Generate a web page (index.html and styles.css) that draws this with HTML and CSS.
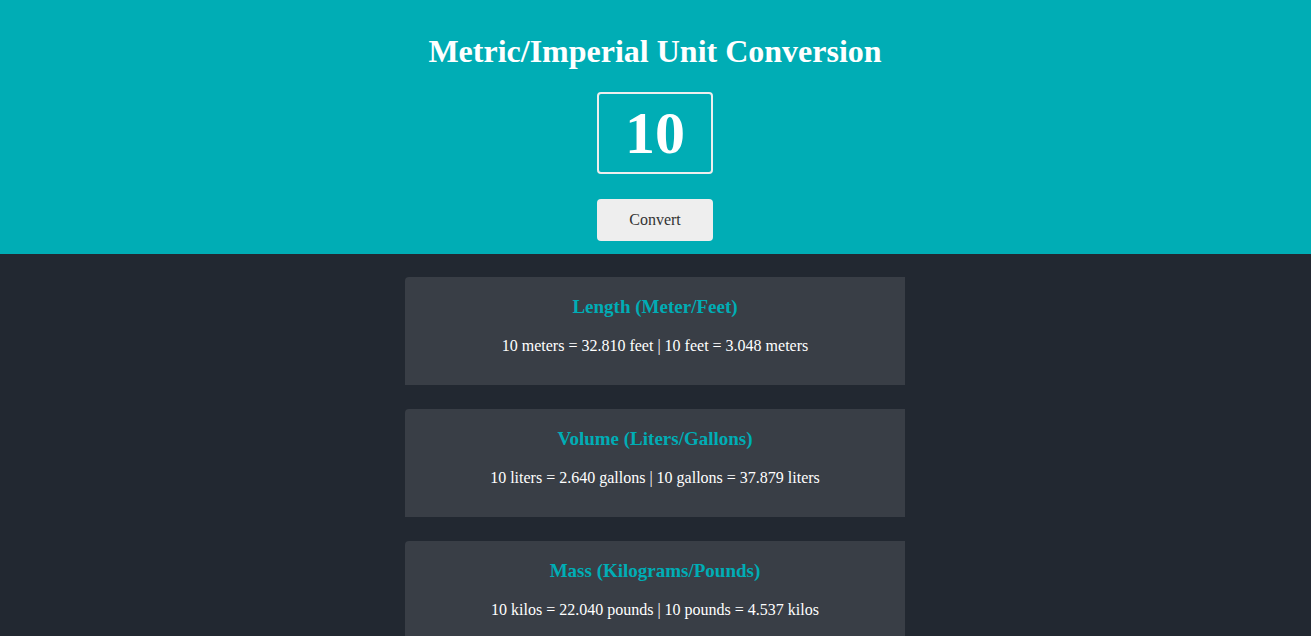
FILE: index.html
```html
<!DOCTYPE html>
<html lang="en">
<head>
<meta charset="utf-8">
<title>Metric/Imperial Unit Conversion</title>
<link rel="stylesheet" href="styles.css">
</head>
<body>
<header class="hero">
  <h1 class="title">Metric/Imperial Unit Conversion</h1>
  <input class="num-input" type="text" value="10">
  <button class="convert-btn">Convert</button>
</header>
<main class="results">
  <section class="card">
    <h2 class="card-title">Length (Meter/Feet)</h2>
    <p class="card-text">10 meters = 32.810 feet | 10 feet = 3.048 meters</p>
  </section>
  <section class="card">
    <h2 class="card-title">Volume (Liters/Gallons)</h2>
    <p class="card-text">10 liters = 2.640 gallons | 10 gallons = 37.879 liters</p>
  </section>
  <section class="card">
    <h2 class="card-title">Mass (Kilograms/Pounds)</h2>
    <p class="card-text">10 kilos = 22.040 pounds | 10 pounds = 4.537 kilos</p>
  </section>
</main>
</body>
</html>
```
FILE: styles.css
```css
* { box-sizing: border-box; }
html, body {
  margin: 0;
  padding: 0;
  background: #222831;
  font-family: "Liberation Serif", "Times New Roman", serif;
  overflow: hidden;
}
body {
  padding-right: 1px;
}
.hero {
  background: #00adb5;
  height: 254px;
  padding-top: 33px;
  margin-right: -1px;
  padding-right: 1px;
  display: flex;
  flex-direction: column;
  align-items: center;
}
.title {
  margin: 0;
  color: #ffffff;
  font-size: 32px;
  line-height: 37px;
  font-weight: bold;
}
.num-input {
  margin-top: 22px;
  width: 116px;
  height: 82px;
  border: 2px solid #eeeeee;
  border-radius: 4px;
  background: transparent;
  color: #ffffff;
  font-family: "Liberation Serif", "Times New Roman", serif;
  font-weight: bold;
  font-size: 60px;
  text-align: center;
  padding: 0;
  outline: none;
}
.convert-btn {
  margin-top: 25px;
  width: 116px;
  height: 42px;
  border: none;
  border-radius: 4px;
  background: #eeeeee;
  color: #333333;
  font-family: "Liberation Serif", "Times New Roman", serif;
  font-size: 16px;
  padding: 0;
}
.results {
  display: flex;
  flex-direction: column;
  align-items: center;
  gap: 24px;
  padding-top: 23px;
}
.card {
  width: 500px;
  height: 108px;
  background: #393e46;
  border-radius: 4px 0 0 0;
  padding-top: 19px;
  text-align: center;
}
.card-title {
  margin: 0;
  color: #00adb5;
  font-size: 19px;
  line-height: 22px;
  font-weight: bold;
}
.card-text {
  margin: 19px 0 0;
  color: #ffffff;
  font-size: 16px;
  line-height: 18px;
}
```
